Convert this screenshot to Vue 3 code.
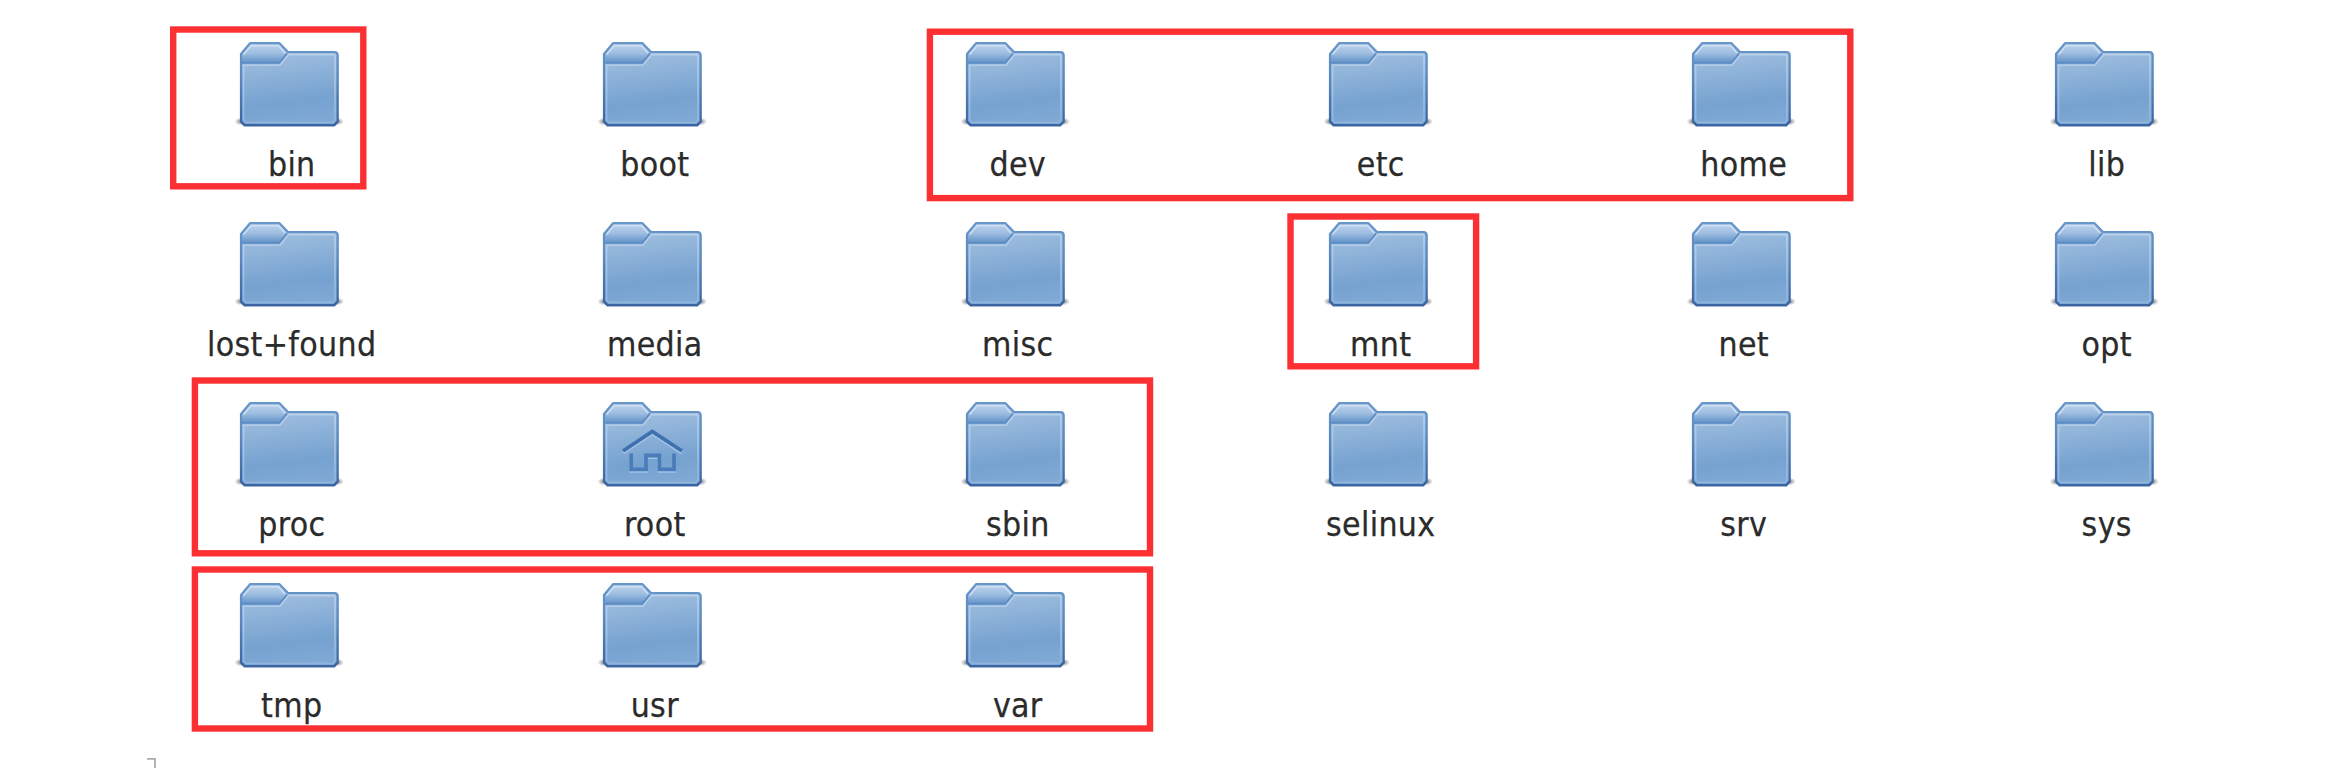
<script setup>
const folders = [
  'bin', 'boot', 'dev', 'etc', 'home', 'lib',
  'lost+found', 'media', 'misc', 'mnt', 'net', 'opt',
  'proc', 'root', 'sbin', 'selinux', 'srv', 'sys',
  'tmp', 'usr', 'var',
]

const frames = [
  { x1: 170, y1: 26.3, x2: 366.5, y2: 189.5 },
  { x1: 926.7, y1: 28.5, x2: 1853.5, y2: 201.3 },
  { x1: 1287.3, y1: 213.3, x2: 1479.3, y2: 369.5 },
  { x1: 191.7, y1: 377.3, x2: 1153.2, y2: 556.5 },
  { x1: 191.7, y1: 566.3, x2: 1153.2, y2: 731.7 },
]
const stroke = 6.4
</script>

<template>
  <main class="desktop">
    <svg class="defs" width="0" height="0" aria-hidden="true">
      <defs>
        <linearGradient id="body-fill" x1="0.35" y1="0" x2="0.5" y2="1">
          <stop offset="0" stop-color="#a6c3e1" />
          <stop offset="0.35" stop-color="#8fb3d9" />
          <stop offset="0.72" stop-color="#76a2d0" />
          <stop offset="1" stop-color="#80a9d5" />
        </linearGradient>
        <linearGradient id="tab-fill" x1="0" y1="0" x2="0" y2="1">
          <stop offset="0" stop-color="#bdd2ec" />
          <stop offset="0.5" stop-color="#9dbde0" />
          <stop offset="1" stop-color="#6292c8" />
        </linearGradient>
        <linearGradient id="edge" x1="0" y1="0" x2="0" y2="1">
          <stop offset="0" stop-color="#6796c9" />
          <stop offset="0.4" stop-color="#5c8ac0" />
          <stop offset="1" stop-color="#3a65a2" />
        </linearGradient>
        <linearGradient id="shine" x1="0" y1="0" x2="0" y2="1">
          <stop offset="0" stop-color="#b9d0ea" />
          <stop offset="1" stop-color="#8fb4dd" />
        </linearGradient>
        <radialGradient id="shadow">
          <stop offset="0" stop-color="#000" stop-opacity="0.55" />
          <stop offset="0.6" stop-color="#000" stop-opacity="0.2" />
          <stop offset="1" stop-color="#000" stop-opacity="0" />
        </radialGradient>
        <symbol id="folder" viewBox="-8 -4 116 96">
          <ellipse cx="1.5" cy="79.5" rx="7" ry="4" fill="url(#shadow)" />
          <ellipse cx="97" cy="79.5" rx="7" ry="4" fill="url(#shadow)" />
          <path d="M1 12 L10 1.2 H39.5 L48 10 H94.5 Q97.7 10 97.7 13.5 V79.5 L94.2 83.2 H4.5 L1 79.5 Z" fill="url(#body-fill)" />
          <path d="M2 12 L10.5 2 H39 L46.5 11 L39 20.8 H2 Z" fill="url(#tab-fill)" />
          <path d="M3.5 12.5 L11 3.7 H38.5 L45 11" fill="none" stroke="#cfdff3" stroke-width="1.6" />
          <path d="M3.6 78 V23.3 H40 L48.5 12.6 H93.6 Q95 12.6 95 14 V78 L92.7 80.3 H6 Z" fill="none" stroke="url(#shine)" stroke-width="1.6" />
          <path d="M2 20.9 H39.3 L47 11.5" fill="none" stroke="#5a8bc3" stroke-width="1.7" />
          <path d="M1 12 L10 1.2 H39.5 L48 10 H94.5 Q97.7 10 97.7 13.5 V79.5 L94.2 83.2 H4.5 L1 79.5 Z" fill="none" stroke="url(#edge)" stroke-width="2.2" stroke-linejoin="round" />
          <path d="M97.7 79.5 L94.2 83.2 H4.5 L1 79.5" fill="none" stroke="#3a65a2" stroke-width="2.5" stroke-opacity="0.6" />
        </symbol>
      </defs>
    </svg>

    <section class="grid">
      <div v-for="name in folders" :key="name" class="item">
        <svg class="icon" viewBox="0 0 116 96">
          <use href="#folder" width="116" height="96" />
          <g v-if="name === 'root'" fill="none" stroke-width="3.8">
            <g stroke="#a3c3e6" transform="translate(0 1.6)">
              <path d="M28 53 L57.3 33.5 L87 53" />
              <path d="M36.2 55.5 V71.3 H51 V57.5 H64.5 V71.3 H79 V55.5" />
            </g>
            <path d="M28 53 L57.3 33.5 L87 53" stroke="#3f71af" />
            <path d="M36.2 55.5 V71.3 H51 V57.5 H64.5 V71.3 H79 V55.5" stroke="#4a7cb9" />
          </g>
        </svg>
        <span class="label">{{ name }}</span>
      </div>
    </section>

    <svg class="frames" viewBox="0 0 2346 780">
      <rect
        v-for="(f, i) in frames"
        :key="i"
        :x="f.x1 + stroke / 2"
        :y="f.y1 + stroke / 2"
        :width="f.x2 - f.x1 - stroke"
        :height="f.y2 - f.y1 - stroke"
        :stroke-width="stroke"
        fill="none"
        stroke="#fc2f33"
      />
      <path d="M147 758.8 H155 V768" fill="none" stroke="#adadad" stroke-width="1.8" />
    </svg>
  </main>
</template>

<style scoped>
.desktop {
  position: relative;
  width: 2346px;
  height: 780px;
  overflow: hidden;
  background: #fff;
}
.defs {
  position: absolute;
}
.grid {
  display: grid;
  grid-template-columns: repeat(6, 363px);
  grid-auto-rows: 180.2px;
  padding: 38px 0 0 108.5px;
}
.item {
  display: flex;
  flex-direction: column;
  align-items: center;
}
.icon {
  display: block;
  width: 116px;
  height: 96px;
}
.label {
  margin: 11px 0 0 3.5px;
  font-family: "DejaVu Sans Condensed", "DejaVu Sans", sans-serif;
  font-stretch: condensed;
  font-size: 33.5px;
  line-height: 40px;
  letter-spacing: 0.35px;
  color: #2b2b2b;
  -webkit-text-stroke: 0.25px #2b2b2b;
  white-space: nowrap;
}
.frames {
  position: absolute;
  inset: 0;
  width: 2346px;
  height: 780px;
  pointer-events: none;
}
</style>

<style>
body {
  margin: 0;
  background: #fff;
}
</style>
